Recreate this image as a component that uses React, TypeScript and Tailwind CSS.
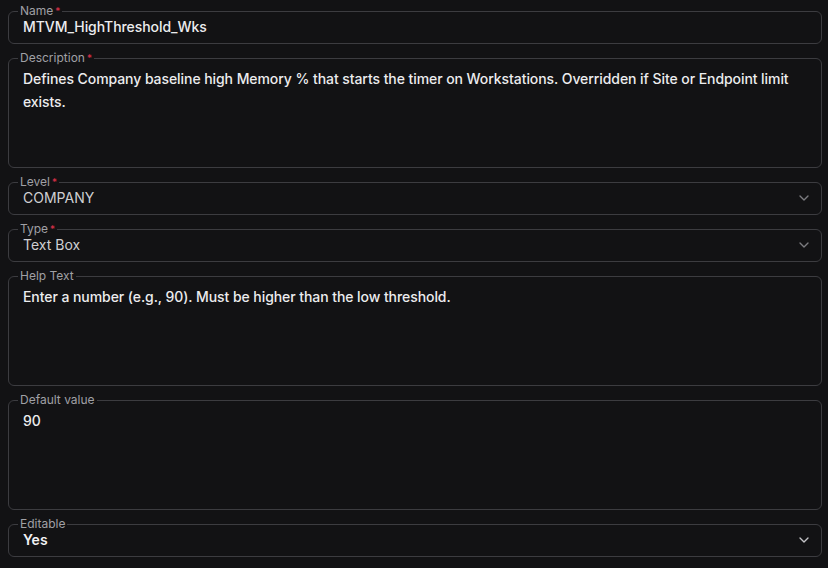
import { ChevronDown } from 'lucide-react';

type FieldProps = {
    label: string;
    value: string;
    required?: boolean;
    multiline?: boolean;
    select?: boolean;
    valueClass?: string;
    chevronClass?: string;
};

const Field = ({ label, value, required, multiline, select, valueClass, chevronClass }: FieldProps) => {
    const textClass = valueClass ?? 'font-medium tracking-[-0.07px] text-[#ececee]';

    return (
        <fieldset
            className={`rounded-md border border-[#3c3c40] px-[9px] ${multiline ? 'h-[116px]' : 'h-[39px]'}`}
        >
            <legend className="px-0.5 text-xs leading-3 text-[#a0a0a5]">
                {label}
                {required && <span className="ml-[2px] align-top text-[10px] leading-3 text-[#e0314b]">*</span>}
            </legend>

            {multiline ? (
                <div className={`pl-[5px] pt-[3px] text-sm leading-[23px] ${textClass}`}>{value}</div>
            ) : (
                <div className="flex items-center justify-between pl-[5px] text-sm leading-5">
                    <span className={textClass}>{value}</span>
                    {select && <ChevronDown size={16} className={chevronClass ?? 'text-[#7c7c80]'} />}
                </div>
            )}
        </fieldset>
    );
};

export default function App() {
    return (
        <div className="min-h-screen bg-[#121214] pl-2 pr-[6px] pt-[5px] font-['Inter','Noto_Sans',sans-serif] flex flex-col gap-2">
            <Field label="Name" required value="MTVM_HighThreshold_Wks" />
            <Field
                label="Description"
                required
                multiline
                value="Defines Company baseline high Memory % that starts the timer on Workstations. Overridden if Site or Endpoint limit exists."
            />
            <Field label="Level" required select value="COMPANY" valueClass="font-normal text-[#cfcfd2]" />
            <Field label="Type" required select value="Text Box" valueClass="font-normal text-[#cfcfd2]" />
            <Field
                label="Help Text"
                multiline
                value="Enter a number (e.g., 90). Must be higher than the low threshold."
            />
            <Field label="Default value" multiline value="90" />
            <Field
                label="Editable"
                select
                value="Yes"
                valueClass="font-semibold text-[#f2f2f4]"
                chevronClass="text-[#c4c4c8]"
            />
        </div>
    );
}
